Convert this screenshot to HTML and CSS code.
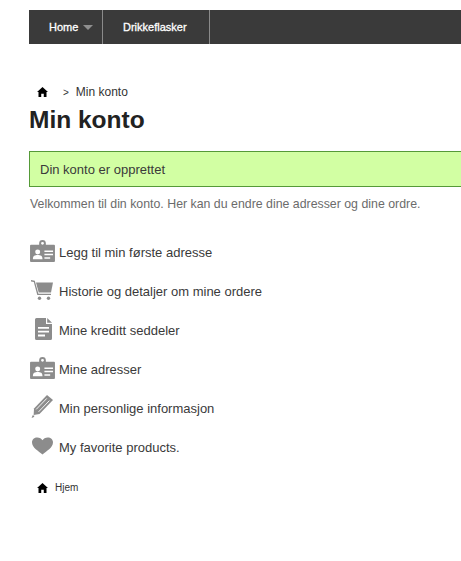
FILE: index.html
```html
<!DOCTYPE html>
<html lang="en">
<head>
    <meta charset="UTF-8">
    <title>Min konto</title>
    <link rel="stylesheet" href="styles.css">
</head>
<body>

<svg class="icon-defs" width="0" height="0">
    <symbol id="i-home" viewBox="0 0 12 11">
        <path d="M6 0 L12 5.6 L10.4 5.6 L10.4 11 L7.4 11 L7.4 7.4 L4.6 7.4 L4.6 11 L1.6 11 L1.6 5.6 L0 5.6 Z"/>
    </symbol>
    <symbol id="i-card" viewBox="0 0 26 24">
        <path fill-rule="evenodd" d="M1 6 H9.5 V4.5 A3.5 3.5 0 0 1 16.5 4.5 V6 H25 Q26 6 26 7 V23 Q26 24 25 24 H1 Q0 24 0 23 V7 Q0 6 1 6 Z M13 3 A1.5 1.5 0 1 0 13 6 A1.5 1.5 0 1 0 13 3 Z M8 11 A2.6 2.6 0 1 0 8 16.2 A2.6 2.6 0 1 0 8 11 Z M3 21 H13 C13 17.500 11 16.800 8 16.800 C5 16.800 3 17.500 3 21 Z M15 12 V13.500 H24 V12 Z M15 15.500 V17 H24 V15.500 Z M15 19 V20.500 H21 V19 Z"/>
    </symbol>
    <symbol id="i-cart" viewBox="0 0 22 20">
        <path d="M0 0 L3.800 0.800 L7.400 13.800 H20 V15 H6.300 L2.800 2 L0 1.400 Z"/>
        <path d="M5 2.500 H22 L20 12.500 H7.700 Z"/>
        <circle cx="8.500" cy="18.200" r="1.700"/>
        <circle cx="17.500" cy="18.200" r="1.700"/>
    </symbol>
    <symbol id="i-doc" viewBox="0 0 17 22">
        <path fill-rule="evenodd" d="M1.500 0 H11 V6 H17 V20.500 Q17 22 15.500 22 H1.500 Q0 22 0 20.500 V1.500 Q0 0 1.500 0 Z M3 9 V10.800 H14 V9 Z M3 12.800 V14.600 H14 V12.800 Z M3 16.600 V18.400 H10 V16.600 Z"/>
        <path d="M12.200 0 L17 4.800 H12.200 Z"/>
    </symbol>
    <symbol id="i-pencil" viewBox="0 0 22 23">
        <path d="M16 0 L22 5 L8.500 19 L2.600 20 L3 13.500 Z"/>
        <path d="M1.600 20.200 L3.400 20.800 L3 22 L0.600 23 Z"/>
        <path d="M15.800 3.400 L5.200 14.400 M18.400 5.600 L7.600 16.800" stroke="#fff" stroke-width="0.9" fill="none"/>
    </symbol>
    <symbol id="i-heart" viewBox="0 0 22 18">
        <path d="M11 18 C7 14.500 0 11 0 5.200 C0 2 2.500 0 5.500 0 C8 0 10 1.200 11 3 C12 1.200 14 0 16.500 0 C19.500 0 22 2 22 5.200 C22 11 15 14.500 11 18 Z"/>
    </symbol>
</svg>

<div class="page">
    <div class="nav">
        <a class="nav-item nav-home">Home <span class="nav-arrow"></span></a>
        <a class="nav-item nav-bottles">Drikkeflasker</a>
    </div>

    <div class="breadcrumb">
        <svg class="home-icon"><use href="#i-home"/></svg>
        <span class="crumb-sep">&gt;</span>
        <span>Min konto</span>
    </div>

    <h1 class="title">Min konto</h1>

    <div class="alert">Din konto er opprettet</div>

    <p class="welcome">Velkommen til din konto. Her kan du endre dine adresser og dine ordre.</p>

    <ul class="account-list">
        <li><span class="icon-box"><svg class="icon-card"><use href="#i-card"/></svg></span>Legg til min første adresse</li>
        <li><span class="icon-box"><svg class="icon-cart"><use href="#i-cart"/></svg></span>Historie og detaljer om mine ordere</li>
        <li><span class="icon-box"><svg class="icon-doc"><use href="#i-doc"/></svg></span>Mine kreditt seddeler</li>
        <li><span class="icon-box"><svg class="icon-card"><use href="#i-card"/></svg></span>Mine adresser</li>
        <li><span class="icon-box"><svg class="icon-pencil"><use href="#i-pencil"/></svg></span>Min personlige informasjon</li>
        <li><span class="icon-box"><svg class="icon-heart"><use href="#i-heart"/></svg></span>My favorite products.</li>
    </ul>

    <div class="footer-link">
        <svg class="home-icon"><use href="#i-home"/></svg>
        <span>Hjem</span>
    </div>
</div>

</body>
</html>
```

FILE: styles.css
```css
html, body {
    height: 100%;
    margin: 0;
    padding: 0;
}

body {
    background-color: #fff;
    overflow: hidden;
    font-family: "Liberation Sans", Arial, sans-serif;
    font-size: 12px;
    color: #333;
}

.icon-defs {
    display: block;
    height: 0;
}

.page {
    width: 452px;
    padding: 10px 0 0 29px;
}

.nav {
    display: flex;
    height: 34px;
    background-color: #3a3a3a;
}

.nav-item {
    display: flex;
    align-items: center;
    border-right: 1px solid #8a8a8a;
    color: #fff;
    font-size: 11px;
    -webkit-text-stroke: 0.3px #fff;
}

.nav-home {
    width: 74px;
    padding-left: 20px;
    box-sizing: border-box;
}

.nav-bottles {
    width: 107px;
    padding-left: 20px;
    box-sizing: border-box;
}

.nav-arrow {
    width: 0;
    height: 0;
    margin-left: 5px;
    border-left: 5px solid transparent;
    border-right: 5px solid transparent;
    border-top: 5px solid #8f8f8f;
}

.breadcrumb {
    display: flex;
    align-items: center;
    height: 16px;
    margin: 40px 0 0 8px;
    color: #333;
}

.home-icon {
    width: 11px;
    height: 10px;
    fill: #000;
}

.crumb-sep {
    margin: 0 7px 0 15px;
    font-size: 10px;
}

.title {
    margin: 6px 0 0 0;
    font-size: 24.5px;
    line-height: 28px;
    font-weight: bold;
    color: #222;
}

.alert {
    margin-top: 17px;
    padding: 0 10px;
    height: 34px;
    line-height: 36px;
    border: 1px solid #559a38;
    background-color: #d2ffa3;
    font-size: 13px;
    color: #3a3a3a;
}

.welcome {
    margin: 9px 0 0 1px;
    font-size: 12.35px;
    line-height: 16px;
    color: #6b6b6b;
}

.account-list {
    list-style: none;
    margin: 21px 0 0 1px;
    padding: 0;
}

.account-list li {
    display: flex;
    align-items: center;
    height: 39px;
    font-size: 13px;
    color: #3a3a3a;
}

.icon-box {
    display: flex;
    width: 26px;
    margin-right: 3px;
    padding-bottom: 4px;
    fill: #8c8c8c;
}

.icon-card {
    width: 25px;
    height: 23px;
}

.icon-cart {
    width: 22px;
    height: 20px;
    margin-left: 1px;
}

.icon-doc {
    width: 17px;
    height: 22px;
    margin-left: 5px;
}

.icon-pencil {
    width: 22px;
    height: 23px;
    margin-left: 1px;
}

.icon-heart {
    width: 21px;
    height: 18px;
    margin-left: 2px;
}

.footer-link {
    display: flex;
    align-items: center;
    gap: 7px;
    margin: 13px 0 0 8px;
    font-size: 10px;
    line-height: 16px;
}
```
